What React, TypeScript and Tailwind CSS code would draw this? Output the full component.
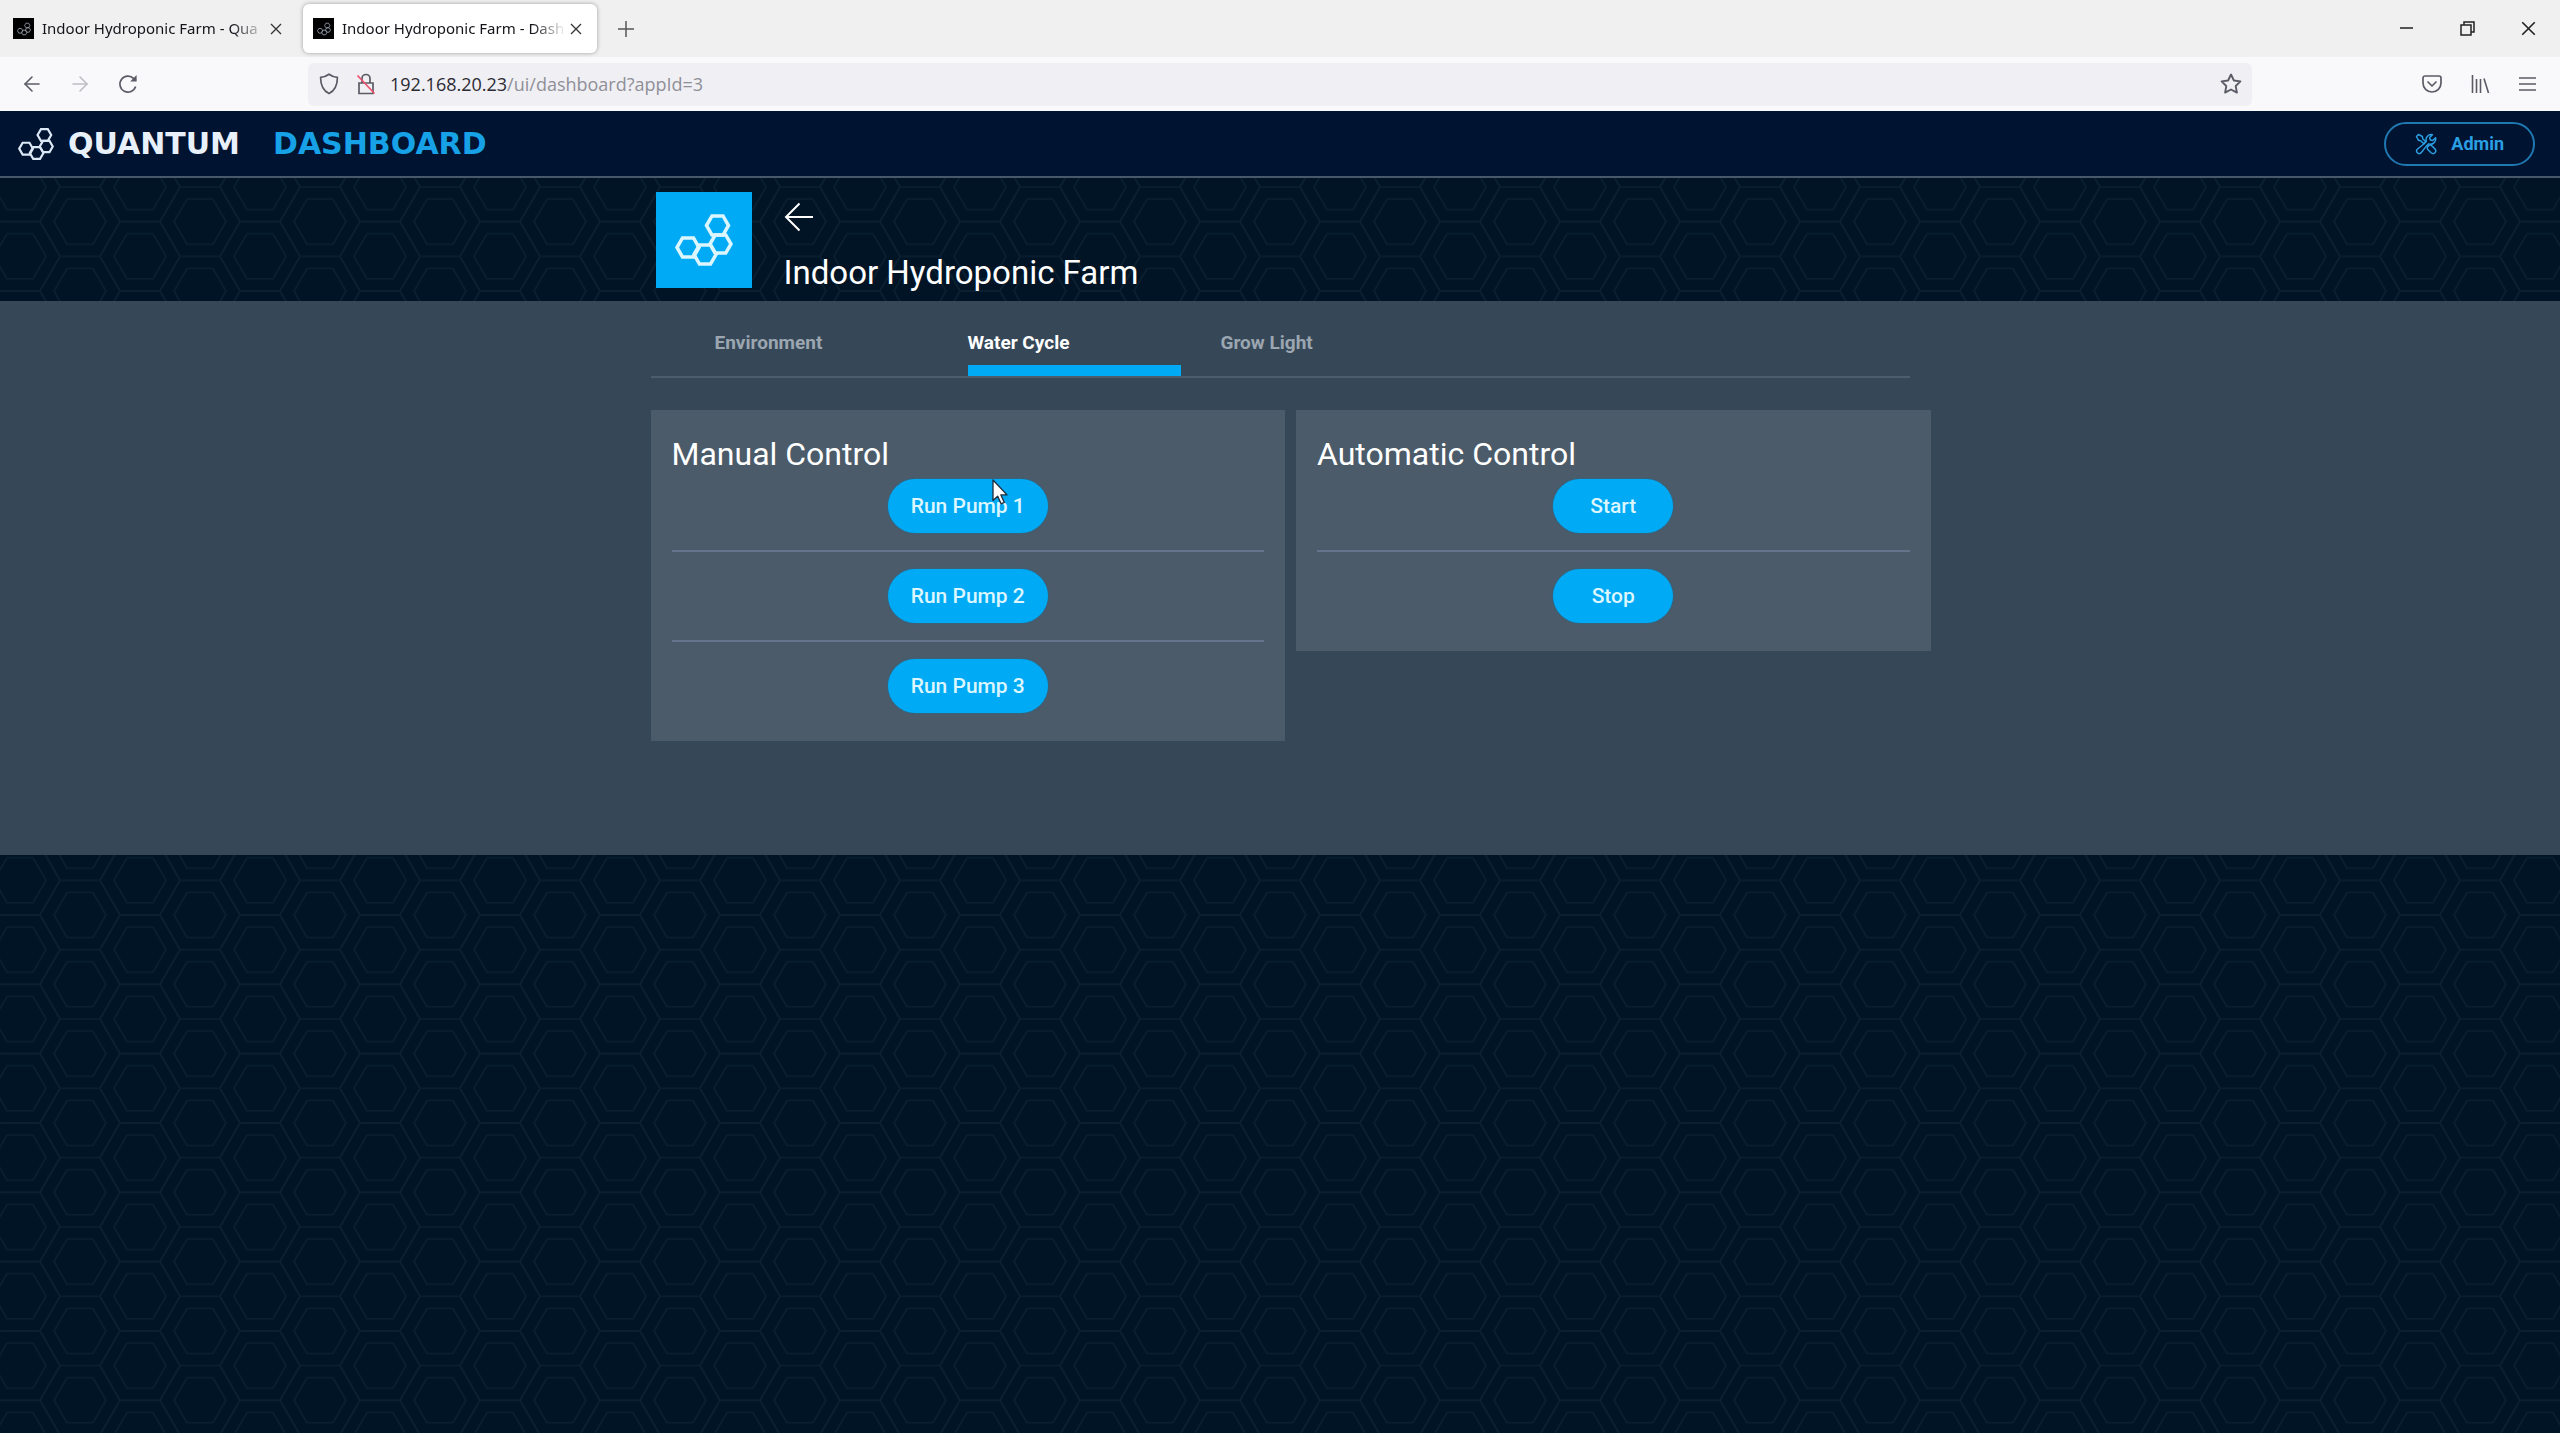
import React, { useId, useState } from 'react';
import { LuArrowLeft, LuArrowRight } from 'react-icons/lu';

const TABS = ['Environment', 'Water Cycle', 'Grow Light'];

const hexPoints = (cx: number, cy: number, r: number) => {
  const h = r * 0.866;
  return [
    [cx - r, cy],
    [cx - r / 2, cy - h],
    [cx + r / 2, cy - h],
    [cx + r, cy],
    [cx + r / 2, cy + h],
    [cx - r / 2, cy + h],
  ]
    .map(p => p.join(','))
    .join(' ');
};

// One tile holds a full cell in the middle and a quarter cell in each corner.
const HexBackground: React.FC = () => {
  const id = useId();
  const w = 120;
  const h = 69.33;
  const centers = [
    [0, 0],
    [w, 0],
    [0, h],
    [w, h],
    [w / 2, h / 2],
  ];
  return (
    <svg className="absolute inset-0 w-full h-full" aria-hidden="true">
      <defs>
        <pattern id={id} width={w} height={h} patternUnits="userSpaceOnUse" patternTransform="translate(20 9)">
          {centers.map(([cx, cy], i) => (
            <g key={i} fill="none" stroke="#0a1f2f" strokeWidth="1.5">
              <polygon points={hexPoints(cx, cy, 40)} />
              <polygon points={hexPoints(cx, cy, 26)} />
            </g>
          ))}
        </pattern>
      </defs>
      <rect width="100%" height="100%" fill={`url(#${id})`} />
    </svg>
  );
};

const MoleculeLogo: React.FC<{ className?: string }> = ({ className }) => (
  <svg viewBox="0 0 58 52" className={className} fill="none" stroke="currentColor" strokeWidth="3.5" aria-hidden="true">
    <polygon points={hexPoints(42.5, 11.5, 11)} />
    <polygon points={hexPoints(45.5, 30, 10.5)} />
    <polygon points={hexPoints(13, 33.5, 11)} />
    <polygon points={hexPoints(30, 40.5, 11)} />
  </svg>
);

const Favicon: React.FC = () => (
  <span className="flex items-center justify-center size-[21px] bg-black text-gray-400 shrink-0">
    <MoleculeLogo className="size-[14px]" />
  </span>
);

const CloseIcon: React.FC<{ className?: string }> = ({ className }) => (
  <svg viewBox="0 0 12 12" className={className} fill="none" stroke="currentColor" strokeWidth="1.3" aria-hidden="true">
    <path d="M1 1l10 10M11 1L1 11" />
  </svg>
);

const ToolsIcon: React.FC = () => (
  <svg viewBox="0 0 24 24" className="size-[22px]" fill="none" stroke="currentColor" strokeWidth="1.6" strokeLinejoin="round" strokeLinecap="round" aria-hidden="true">
    <path d="M1.600 3.800l2.200-2.200 4.200 2.200.4 2.400 3.400 3.400-2.200 2.200-3.400-3.400L3.800 8z" />
    <path d="M13.400 15.600l2.400-2.400c1-.2 1.800 0 2.400.6l3.800 3.800a3 3 0 0 1-4.200 4.200L14 18c-.6-.6-.8-1.400-.6-2.400z" />
    <path d="M22.400 5.200l-3 3-2.800-.6-.6-2.800 3-3a5.600 5.600 0 0 0-6.600 7.200L9.600 12 2.200 18a2.900 2.900 0 0 0 4 4l6-7.400 2.800-2.800a5.600 5.600 0 0 0 7.400-6.600z" />
  </svg>
);

const BrowserTab: React.FC<{ title: string; active?: boolean }> = ({ title, active }) => (
  <div
    className={
      active
        ? 'flex items-center w-[294px] h-[49px] pl-[10px] pr-[15px] rounded-md bg-white shadow-[0_0_4px_rgba(0,0,0,0.35)]'
        : 'flex items-center w-[303px] h-[49px] pl-[13px] pr-[21px]'
    }
  >
    <Favicon />
    <span className="ml-2 flex-1 whitespace-nowrap text-[15px] font-['Noto_Sans',sans-serif] text-[#15141a] [mask-image:linear-gradient(to_right,black_85%,transparent)]">
      {title}
    </span>
    <button aria-label="Close tab" className="ml-1 text-[#333]">
      <CloseIcon className="size-3" />
    </button>
  </div>
);

const BrowserChrome: React.FC = () => (
  <div className="font-['Open_Sans','Noto_Sans',sans-serif]">
    <div className="flex items-center h-[57px] bg-[#f0f0f0]">
      <BrowserTab title="Indoor Hydroponic Farm - Qua" />
      <BrowserTab title="Indoor Hydroponic Farm - Dash" active />
      <button aria-label="New tab" className="ml-[21px] text-[#555]">
        <svg viewBox="0 0 16 16" className="size-4" fill="none" stroke="currentColor" strokeWidth="1.5" aria-hidden="true">
          <path d="M8 0v16M0 8h16" />
        </svg>
      </button>
      <div className="ml-auto mr-6 flex items-center gap-[46px] text-[#222]">
        <button aria-label="Minimize">
          <svg viewBox="0 0 15 15" className="size-[15px]" stroke="currentColor" strokeWidth="1.5" aria-hidden="true">
            <path d="M1 7h13" />
          </svg>
        </button>
        <button aria-label="Restore">
          <svg viewBox="0 0 15 15" className="size-[15px]" fill="none" stroke="currentColor" strokeWidth="1.5" aria-hidden="true">
            <path d="M1 4h10v10H1zM4 4V1h10v10h-3" />
          </svg>
        </button>
        <button aria-label="Close window">
          <CloseIcon className="size-[15px]" />
        </button>
      </div>
    </div>

    <div className="flex items-center h-[54px] pl-5 pr-6 bg-[#f9f9fb] text-[#5b5b66]">
      <button aria-label="Back">
        <LuArrowLeft className="size-6" strokeWidth={1.6} />
      </button>
      <button aria-label="Forward" className="ml-6 text-[#bdbdc4]">
        <LuArrowRight className="size-6" strokeWidth={1.6} />
      </button>
      <button aria-label="Reload" className="ml-[26px]">
        <svg viewBox="0 0 20 20" className="size-5" fill="none" stroke="currentColor" strokeWidth="1.7" aria-hidden="true">
          <path d="M17.6 12.4A8 8 0 1 1 15.8 4.6L18 6.6" />
          <path d="M18.6 1v6.4h-6.4z" fill="currentColor" stroke="none" />
        </svg>
      </button>
      <div className="ml-[170px] mr-[170px] flex flex-1 items-center h-[43px] pl-[11px] pr-[9px] rounded-md bg-[#f0f0f4]">
        <svg viewBox="0 0 20 22" className="w-5 h-[22px]" fill="none" stroke="currentColor" strokeWidth="1.7" aria-hidden="true">
          <path d="M10 1.200c2.400 1.800 5 2.800 8.400 3.200 0 7.400-1.600 12.600-8.400 16.200C3.200 17 1.600 11.800 1.600 4.400 5 4 7.600 3 10 1.200z" strokeLinejoin="round" />
        </svg>
        <svg viewBox="0 0 20 22" className="ml-[17px] w-5 h-[22px]" fill="none" stroke="currentColor" strokeWidth="1.7" aria-hidden="true">
          <path d="M3 10h14v10.500H3zM6 10V5.500a4 4 0 0 1 8 0V10" />
          <path d="M1.500 2.500l17 18" stroke="#f0506e" />
        </svg>
        <span className="ml-[14px] flex-1 text-[18px] text-[#8f8f98]">
          <span className="text-[#2b2a33]">192.168.20.23</span>/ui/dashboard?appId=3
        </span>
        <button aria-label="Bookmark this page">
          <svg viewBox="0 0 24 24" className="size-6" fill="none" stroke="currentColor" strokeWidth="1.9" strokeLinejoin="round" aria-hidden="true">
            <path d="M12 2.500l2.900 6 6.500.9-4.700 4.600 1.200 6.600L12 17.500l-5.900 3.100 1.200-6.600L2.600 9.400l6.500-.9z" />
          </svg>
        </button>
      </div>
      <div className="flex items-center gap-[29px]">
        <button aria-label="Save to Pocket">
          <svg viewBox="0 0 20 18" className="w-5 h-[18px]" fill="none" stroke="currentColor" strokeWidth="1.7" strokeLinecap="round" strokeLinejoin="round" aria-hidden="true">
            <path d="M3 1h14a2 2 0 0 1 2 2v5a9 9 0 0 1-18 0V3a2 2 0 0 1 2-2z" />
            <path d="M6 7l4 4 4-4" />
          </svg>
        </button>
        <button aria-label="Library">
          <svg viewBox="0 0 19 20" className="w-[19px] h-5" fill="none" stroke="currentColor" strokeWidth="1.6" aria-hidden="true">
            <path d="M1.500 1v18M5.500 5v14M9.500 5v14M13 4.500l4.500 14.500" />
          </svg>
        </button>
        <button aria-label="Menu">
          <svg viewBox="0 0 17 16" className="w-[17px] h-4" stroke="currentColor" strokeWidth="1.6" aria-hidden="true">
            <path d="M0 2h17M0 8h17M0 14h17" />
          </svg>
        </button>
      </div>
    </div>
  </div>
);

const ControlButton: React.FC<{ children: React.ReactNode }> = ({ children }) => (
  <button className="min-w-[120px] h-[54px] px-[23px] rounded-full bg-[#00aaf5] text-[21px] leading-none font-medium text-[#dcf6ff] shadow-[0_0_2px_#1273a5]">
    {children}
  </button>
);

const ControlPanel: React.FC<{ title: string; actions: string[] }> = ({ title, actions }) => (
  <section className="px-[21px] pt-[25px] pb-[11px] bg-[#4b5b69]">
    <h2 className="h-11 text-[32px] leading-[38px] text-white">{title}</h2>
    <ul className="divide-y-2 divide-[#64748a]">
      {actions.map(action => (
        <li key={action} className="flex justify-center pb-[17px] not-first:pt-[17px]">
          <ControlButton>{action}</ControlButton>
        </li>
      ))}
    </ul>
  </section>
);

const App: React.FC = () => {
  const [activeTab, setActiveTab] = useState('Water Cycle');

  return (
    <div className="flex flex-col min-h-screen bg-[#001426] font-[Roboto,sans-serif]">
      <BrowserChrome />

      <header className="flex items-center h-[67px] pl-[18px] pr-[25px] bg-[#001331] border-b-2 border-[#46586a]">
        <MoleculeLogo className="w-9 h-[34px] text-[#dce8f5]" />
        <div className="ml-[14px] flex gap-[15px] font-['DejaVu_Sans',sans-serif] text-[30px] leading-none font-bold">
          <span className="min-w-[190px] text-[#e8f0fa]">QUANTUM</span>
          <span className="text-[#17a1e6]">DASHBOARD</span>
        </div>
        <button className="ml-auto flex items-center gap-[14px] h-11 px-[29px] rounded-full border-2 border-[#1f78b0] text-[18px] font-bold text-[#2a9fe4]">
          <ToolsIcon />
          Admin
        </button>
      </header>

      <main className="relative flex-1">
        <HexBackground />
        <div className="relative pl-[21px]">
          <div className="flex max-w-[1280px] h-[123px] mx-auto pl-[5px] pt-[14px]">
            <div className="flex items-center justify-center size-24 bg-[#00aaf5] text-[#dcf6ff]">
              <MoleculeLogo className="w-[58px] h-[52px]" />
            </div>
            <div className="ml-8">
              <a href="#apps" aria-label="Back to apps" className="block h-[62px] pt-[10px] text-white">
                <svg viewBox="0 0 30 30" className="size-[30px]" fill="none" stroke="currentColor" strokeWidth="2" aria-hidden="true">
                  <path d="M29 15H2M15.500 1.500L2 15l13.500 13.500" />
                </svg>
              </a>
              <h1 className="text-[33px] leading-[38px] text-white">Indoor Hydroponic Farm</h1>
            </div>
          </div>
        </div>

        <div className="relative min-h-[554px] pl-[21px] bg-[#364858]">
          <div className="max-w-[1280px] mx-auto">
            <div role="tablist" className="flex gap-10 h-[77px] mr-[21px] pl-16 border-b-2 border-[#4c5d6e]">
              {TABS.map(tab => (
                <button
                  key={tab}
                  role="tab"
                  aria-selected={tab === activeTab}
                  onClick={() => setActiveTab(tab)}
                  className={
                    tab === activeTab
                      ? 'w-[213px] pt-[21px] text-left text-[19px] font-bold text-white border-b-[11px] border-[#00aaf5]'
                      : 'w-[213px] pt-[21px] text-left text-[19px] font-bold text-[#9ba6b1] border-b-[11px] border-transparent'
                  }
                >
                  {tab}
                </button>
              ))}
            </div>
            <div className="grid grid-cols-2 items-start gap-[11px] pt-8">
              <ControlPanel title="Manual Control" actions={['Run Pump 1', 'Run Pump 2', 'Run Pump 3']} />
              <ControlPanel title="Automatic Control" actions={['Start', 'Stop']} />
            </div>
          </div>
        </div>
      </main>

      {/* mouse pointer */}
      <svg viewBox="0 0 16 26" className="absolute left-[992px] top-[479px] w-4 h-[26px]" fill="#fff" stroke="#1d2b3a" strokeWidth="1.3" strokeLinejoin="round" aria-hidden="true">
        <path d="M1 1v20.500l4.700-4.300 3.400 7.600 3.200-1.400-3.400-7.500H15z" />
      </svg>
    </div>
  );
};

export default App;
